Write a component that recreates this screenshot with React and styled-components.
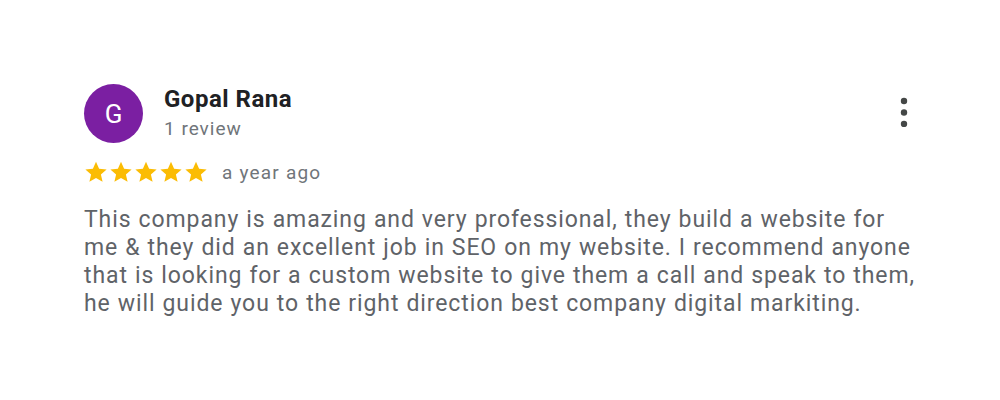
import React from 'react';
import styled, { createGlobalStyle } from 'styled-components';

const GlobalStyle = createGlobalStyle`
  body {
    margin: 0;
    background: #ffffff;
    font-family: Roboto, 'Noto Sans', sans-serif;
  }
`;

const Card = styled.div`
  width: 1000px;
  height: 400px;
  box-sizing: border-box;
  padding: 84px 78px 0 84px;
  background: #ffffff;
`;

const Header = styled.div`
  display: flex;
  align-items: flex-start;
  padding-right: 6px;
`;

const Avatar = styled.div`
  width: 59px;
  height: 59px;
  border-radius: 50%;
  background: ${(p) => p.color};
  color: #ffffff;
  display: flex;
  align-items: center;
  justify-content: center;
  font-size: 26px;
  flex-shrink: 0;
`;

const Who = styled.div`
  margin-left: 21px;
  flex: 1;
  padding-top: 1px;
`;

const Name = styled.div`
  font-size: 24px;
  font-weight: 700;
  letter-spacing: 0.5px;
  color: #202124;
  line-height: 28px;
`;

const Sub = styled.div`
  margin-top: 4px;
  font-size: 19px;
  letter-spacing: 1px;
  color: #70757a;
  line-height: 24px;
`;

const MoreButton = styled.button`
  border: none;
  background: none;
  padding: 0;
  margin: 8px 2px 0 0;
  width: 20px;
  height: 40px;
  display: flex;
  align-items: center;
  justify-content: center;
  color: #444746;
`;

const Rating = styled.div`
  display: flex;
  align-items: center;
  margin-top: 17px;
`;

const Stars = styled.div`
  display: flex;
  gap: 1px;
`;

const When = styled.span`
  margin-left: 14px;
  font-size: 19px;
  letter-spacing: 1.2px;
  color: #70757a;
`;

const Body = styled.p`
  margin: 22px 0 0 0;
  font-size: 23px;
  letter-spacing: 0.9px;
  word-spacing: 0.5px;
  line-height: 28px;
  color: #5f6368;
`;

const Star = () => (
  <svg width="24" height="24" viewBox="0 0 24 24">
    <path
      fill="#fbbc04"
      d="M12 1.8l3.1 6.9 7.5.7-5.7 5 1.7 7.4L12 17.9l-6.6 3.9 1.7-7.4-5.7-5 7.5-.7z"
    />
  </svg>
);

const review = {
  initial: 'G',
  color: '#7b1fa2',
  name: 'Gopal Rana',
  count: '1 review',
  stars: 5,
  when: 'a year ago',
  text:
    'This company is amazing and very professional, they build a website for me & they did an excellent job in SEO on my website. I recommend anyone that is looking for a custom website to give them a call and speak to them, he will guide you to the right direction best company digital markiting.',
};

const App = () => {
  return (
    <>
      <GlobalStyle />
      <Card>
        <Header>
          <Avatar color={review.color}>{review.initial}</Avatar>
          <Who>
            <Name>{review.name}</Name>
            <Sub>{review.count}</Sub>
          </Who>
          <MoreButton aria-label='More'>
            <svg width="8" height="30" viewBox="0 0 8 30">
              <circle cx="4" cy="4" r="3.2" fill="currentColor" />
              <circle cx="4" cy="15.5" r="3.2" fill="currentColor" />
              <circle cx="4" cy="27" r="3.2" fill="currentColor" />
            </svg>
          </MoreButton>
        </Header>
        <Rating>
          <Stars>
            {Array.from({ length: review.stars }).map((_, i) => (
              <Star key={i} />
            ))}
          </Stars>
          <When>{review.when}</When>
        </Rating>
        <Body>{review.text}</Body>
      </Card>
    </>
  );
};

export default App;
